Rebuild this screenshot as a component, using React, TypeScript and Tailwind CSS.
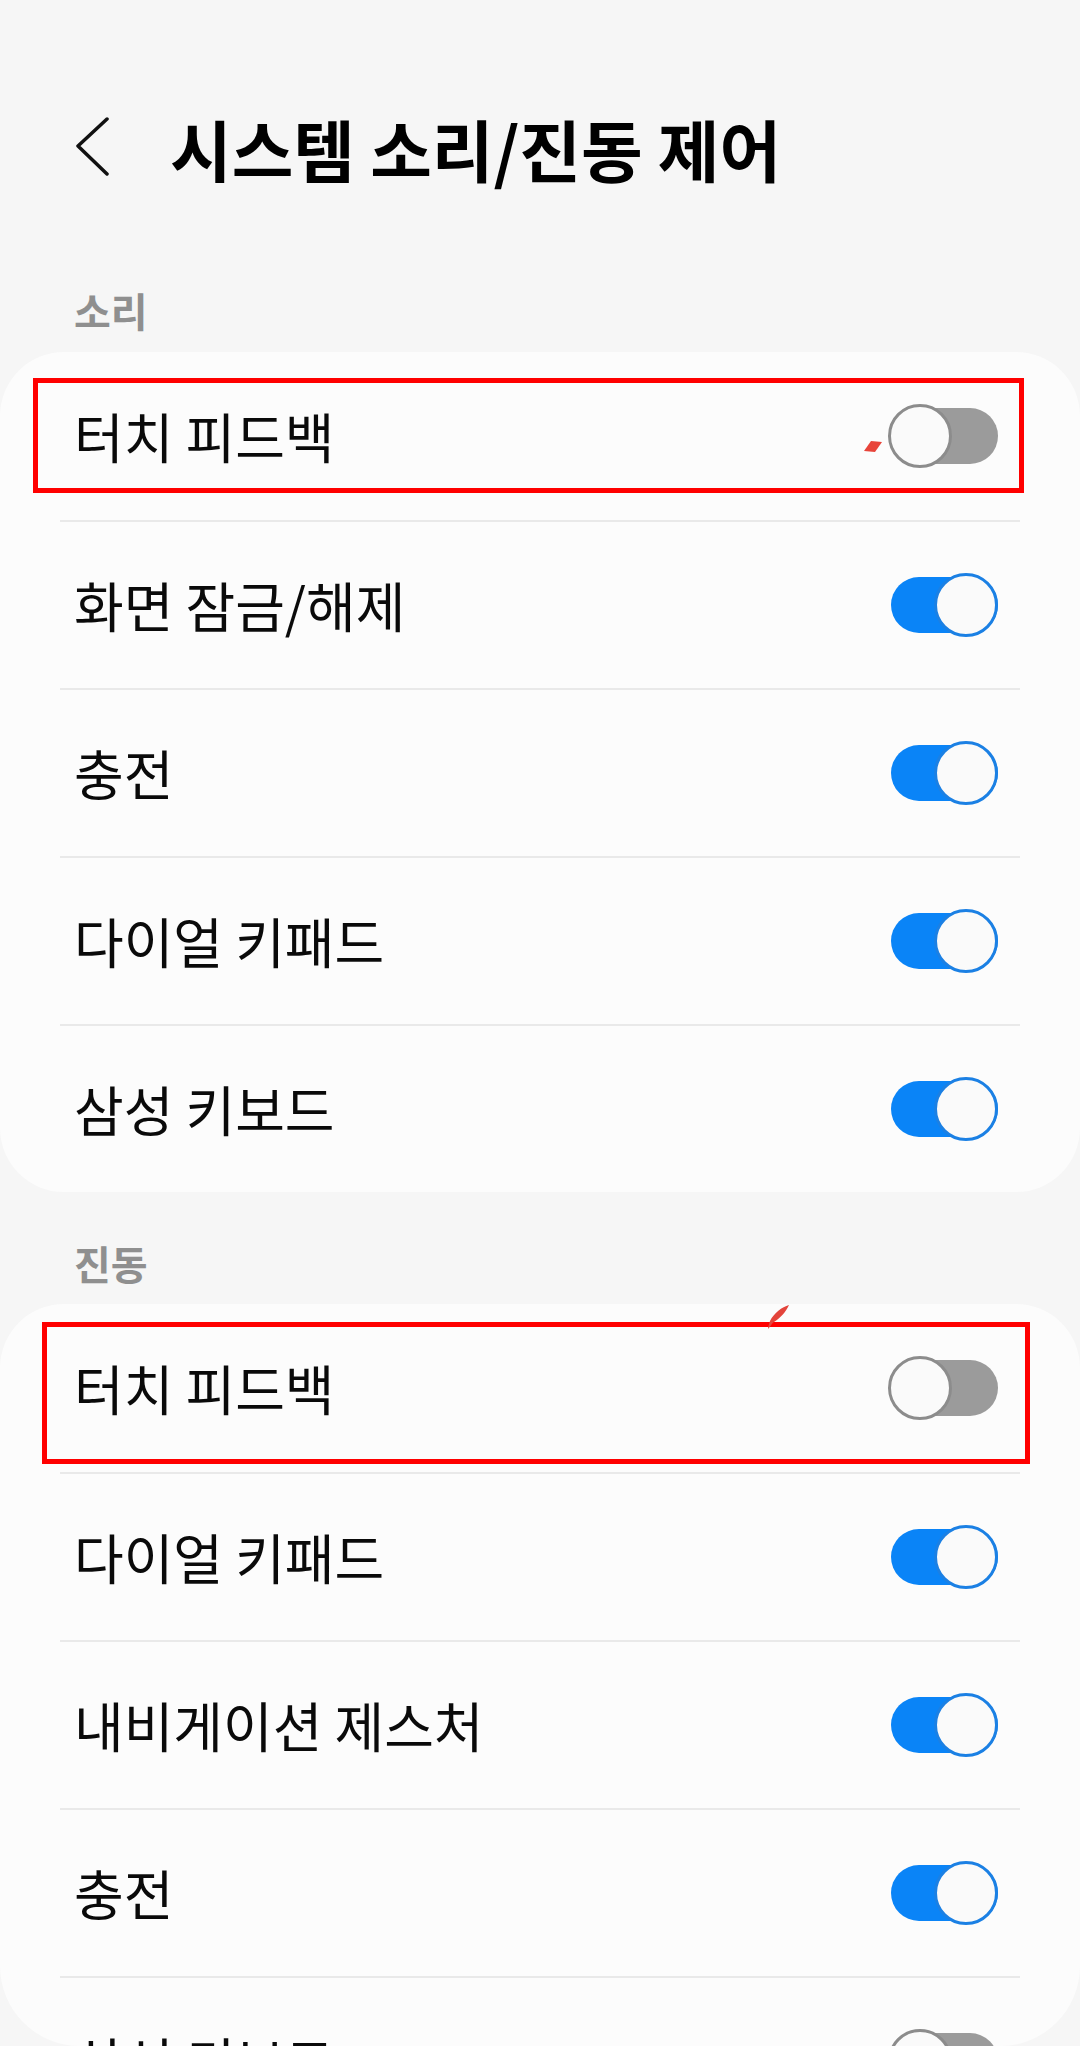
import React from 'react';

interface Item {
  label: string;
  on: boolean;
}

const soundItems: Item[] = [
  { label: '터치 피드백', on: false },
  { label: '화면 잠금/해제', on: true },
  { label: '충전', on: true },
  { label: '다이얼 키패드', on: true },
  { label: '삼성 키보드', on: true },
];

const vibrationItems: Item[] = [
  { label: '터치 피드백', on: false },
  { label: '다이얼 키패드', on: true },
  { label: '내비게이션 제스처', on: true },
  { label: '충전', on: true },
  { label: '삼성 키보드', on: false },
];

const Toggle: React.FC<{ on: boolean }> = ({ on }) => (
  <div className="relative w-[110px] h-[64px] shrink-0">
    <div
      className={`absolute left-[3px] right-0 top-[4px] h-[56px] rounded-full ${
        on ? 'bg-[#0a84f7]' : 'bg-[#9b9b9b]'
      }`}
    />
    <div
      className={`absolute top-0 w-[64px] h-[64px] rounded-full bg-[#fafafa] border-[3px] ${
        on ? 'right-0 border-[#1b80e4]' : 'left-0 border-[#8c8c8c]'
      }`}
    />
  </div>
);

const Row: React.FC<{ item: Item; first: boolean }> = ({ item, first }) => (
  <div className={`mx-[60px] h-[168px] ${first ? '' : 'border-t-2 border-[#e9e9e9]'}`}>
    <div className="h-full flex items-center justify-between pl-[14px] pr-[22px]">
      <span className="text-[54px] leading-none text-[#0a0a0a]">{item.label}</span>
      <Toggle on={item.on} />
    </div>
  </div>
);

const Card: React.FC<{ items: Item[]; children?: React.ReactNode }> = ({ items, children }) => (
  <div className="relative bg-[#fcfcfc] rounded-[64px]">
    {items.map((item, i) => (
      <Row key={i} item={item} first={i === 0} />
    ))}
    {children}
  </div>
);

export default function App() {
  return (
    <div
      className="w-[1080px] h-[2046px] bg-[#f6f6f6] overflow-hidden"
      style={{ fontFamily: '"Noto Sans CJK KR", "Noto Sans", sans-serif' }}
    >
      <div className="h-[2046px] overflow-hidden rounded-b-[80px]">
        {/* Header */}
        <div className="mt-[107px] h-[80px] flex items-center">
          <svg className="ml-[74px] w-[36px] h-[60px]" viewBox="0 0 36 60" fill="none">
            <path d="M33 2 L4 29 L33 57" stroke="#111" strokeWidth="3.5" strokeLinecap="round" strokeLinejoin="round" />
          </svg>
          <h1 className="ml-[60px] text-[67px] font-bold leading-none text-black">
            시스템 소리/진동 제어
          </h1>
        </div>

        {/* 소리 */}
        <div className="pt-[98px] pb-[17px] pl-[74px] text-[40px] leading-[50px] font-semibold text-[#8f8f8f]">
          소리
        </div>
        <Card items={soundItems}>
          <div className="absolute left-[33px] top-[26px] w-[991px] h-[115px] border-[5px] border-[#ff0000]" />
          <svg className="absolute left-[862px] top-[86px] w-[22px] h-[16px]" viewBox="0 0 22 16">
            <path d="M2 13 L9 3 L20 4 L13 14 Z" fill="#e8443a" />
          </svg>
        </Card>

        {/* 진동 */}
        <div className="pt-[46px] pb-[16px] pl-[74px] text-[40px] leading-[50px] font-semibold text-[#8f8f8f]">
          진동
        </div>
        <Card items={vibrationItems}>
          <div className="absolute left-[42px] top-[18px] w-[988px] h-[142px] border-[5px] border-[#ff0000]" />
          <svg className="absolute left-[764px] top-[0px] w-[28px] h-[26px]" viewBox="0 0 28 26">
            <path d="M25 1 C18 3 10 9 6 17 C5 20 4 23 4 25 C7 22 8 19 10 18 C16 14 22 8 25 1 Z" fill="#e3443b" />
          </svg>
        </Card>
      </div>
    </div>
  );
}
